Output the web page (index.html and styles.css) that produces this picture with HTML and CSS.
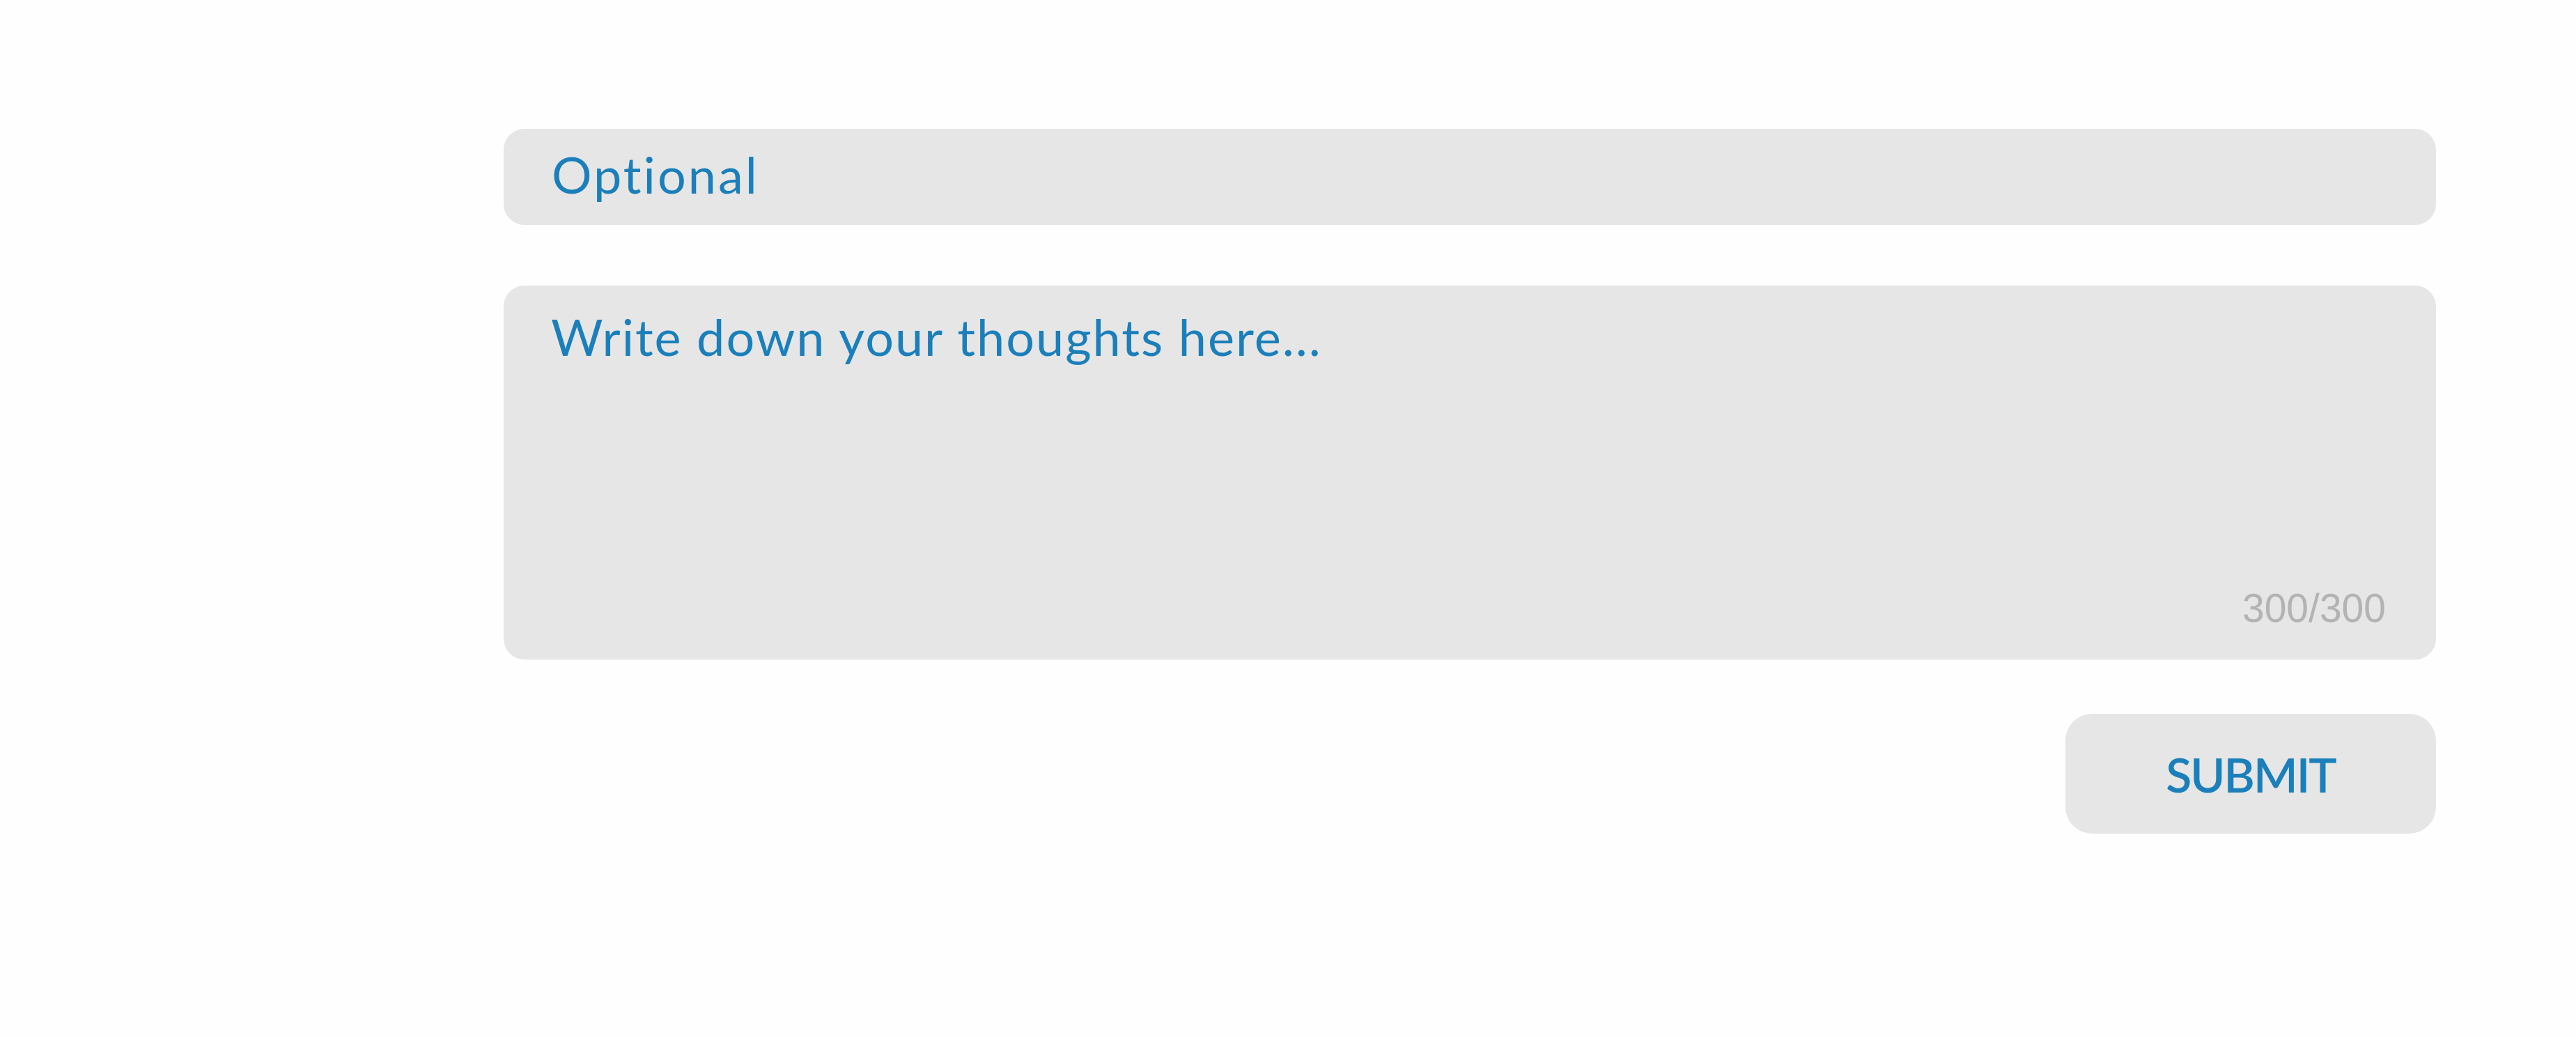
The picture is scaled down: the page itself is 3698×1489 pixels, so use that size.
FILE: index.html
```html
<!DOCTYPE html>
<html lang="en">
<head>
<meta charset="utf-8">
<title>Feedback</title>
<link rel="stylesheet" href="styles.css">
</head>
<body>
<form class="form">
  <input class="field" type="text" placeholder="Optional">
  <div class="area-wrap">
    <textarea class="area" placeholder="Write down your thoughts here..."></textarea>
    <span class="counter">300/300</span>
  </div>
  <div class="actions">
    <button class="submit" type="button">SUBMIT</button>
  </div>
</form>
</body>
</html>
```
FILE: styles.css
```css
html, body {
  margin: 0;
  padding: 0;
  background: #fefefe;
}
body {
  width: 3698px;
  height: 1489px;
  font-family: "Lato", "Liberation Sans", sans-serif;
}
.form {
  width: 2774px;
  margin-left: 723px;
  padding-top: 185px;
  display: flex;
  flex-direction: column;
}
.field {
  box-sizing: border-box;
  height: 138px;
  width: 100%;
  border: none;
  outline: none;
  border-radius: 30px;
  background: #e6e6e6;
  padding: 0 69px 8px;
  font-family: "Lato", "Liberation Sans", sans-serif;
  font-weight: 400;
  font-size: 72px;
  letter-spacing: 3px;
  color: #1a7fba;
}
.field::placeholder, .area::placeholder {
  color: #1a7fba;
  opacity: 1;
}
.area-wrap {
  position: relative;
  margin-top: 87px;
  height: 537px;
}
.area {
  box-sizing: border-box;
  display: block;
  width: 100%;
  height: 100%;
  border: none;
  outline: none;
  resize: none;
  border-radius: 30px;
  background: #e6e6e6;
  padding: 30px 68px;
  font-family: "Lato", "Liberation Sans", sans-serif;
  font-weight: 400;
  font-size: 72px;
  line-height: 1.2;
  letter-spacing: 2px;
  color: #1a7fba;
}
.counter {
  position: absolute;
  right: 72px;
  bottom: 45px;
  font-family: "Liberation Sans", Arial, sans-serif;
  font-size: 57px;
  line-height: 1;
  color: #b3b3b3;
}
.actions {
  display: flex;
  justify-content: flex-end;
  margin-top: 78px;
}
.submit {
  width: 532px;
  height: 172px;
  border: none;
  border-radius: 38px;
  background: #e6e6e6;
  font-family: "Lato", "Liberation Sans", sans-serif;
  font-weight: 600;
  font-size: 68px;
  letter-spacing: -2px;
  color: #1a7fba;
  padding: 0;
  cursor: pointer;
}
```
